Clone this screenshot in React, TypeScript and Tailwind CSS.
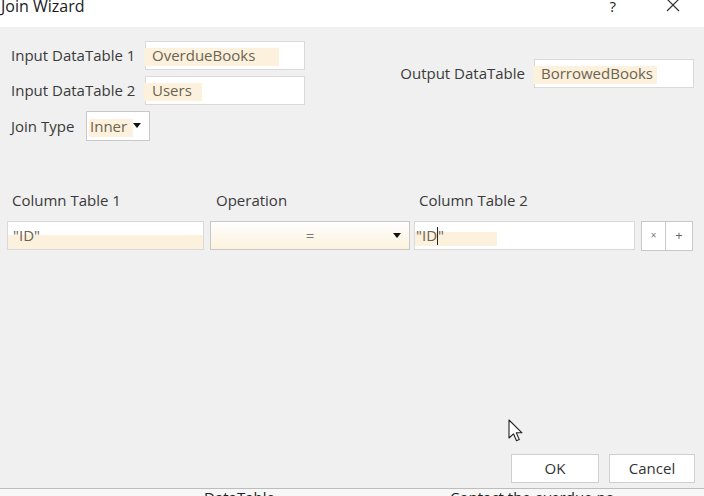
import React from "react";

const font = { fontFamily: '"Open Sans", "Noto Sans", sans-serif' };

function Field({ value, className = "", hl = "w-[135px]" }: { value: string; className?: string; hl?: string }) {
  return (
    <div className={`relative h-[29px] border border-[#d9d9d9] bg-white ${className}`}>
      <div className={`absolute left-[-2px] top-[6px] h-[18px] bg-[#fcf1dc] ${hl}`} />
      <span className="relative block pl-[6px] text-[15px] leading-[27px] text-[#6d6352]">{value}</span>
    </div>
  );
}

function Caret() {
  return (
    <svg width="8" height="5" viewBox="0 0 8 5">
      <path d="M0 0h8L4 5z" fill="#111" />
    </svg>
  );
}

export default function App() {
  return (
    <div className="relative h-[496px] w-[704px] overflow-hidden bg-white" style={font}>
      {/* title bar */}
      <div className="flex h-[27px] items-start justify-between bg-white">
        <span className="mt-[-6px] pl-[1px] text-[16px] text-[#1a1a1a]">Join Wizard</span>
        <div className="mt-[-5px] flex items-start gap-[50px] pr-[24px] text-[#222]">
          <span className="text-[15px]">?</span>
          <svg width="14" height="14" viewBox="0 0 14 14" className="mt-[3px]">
            <path d="M1 1l12 12M13 1L1 13" stroke="#333" strokeWidth="1.2" />
          </svg>
        </div>
      </div>

      {/* dialog body */}
      <div className="flex h-[461px] flex-col bg-[#f0f0f0] text-[15px] text-[#3a3a3a]">
        <div className="flex justify-between pr-[10px] pt-[14px]">
          <div className="flex flex-col gap-[6px] pl-[11px]">
            <div className="flex items-center">
              <span className="w-[134px]">Input DataTable 1</span>
              <Field value="OverdueBooks" className="w-[160px]" />
            </div>
            <div className="flex items-center">
              <span className="w-[134px]">Input DataTable 2</span>
              <Field value="Users" className="w-[160px]" hl="w-[58px]" />
            </div>
            <div className="flex items-center">
              <span className="w-[75px]">Join Type</span>
              <div className="relative flex h-[30px] w-[64px] items-center border border-[#c8c8c8] bg-white">
                <div className="absolute left-[2px] top-[7px] h-[18px] w-[44px] bg-[#fcf1dc]" />
                <span className="relative pl-[3px] text-[#6d6352]">Inner</span>
                <span className="relative mb-[2px] ml-[6px]">
                  <Caret />
                </span>
              </div>
            </div>
          </div>
          <div className="flex items-center gap-[9px] self-start pt-[18px]">
            <span>Output DataTable</span>
            <Field value="BorrowedBooks" className="w-[160px]" hl="w-[124px]" />
          </div>
        </div>

        {/* column headers */}
        <div className="mt-[48px] flex pl-[12px]">
          <span className="w-[204px]">Column Table 1</span>
          <span className="w-[203px]">Operation</span>
          <span>Column Table 2</span>
        </div>

        {/* join row */}
        <div className="mt-[9px] flex items-center pl-[7px]">
          <div className="relative h-[29px] w-[197px] border border-[#d9d9d9] bg-white">
            <div className="absolute inset-x-0 bottom-0 h-[14px] bg-[#fcf1dc]" />
            <span className="relative pl-[5px] leading-[27px] text-[#6d6352]">"ID"</span>
          </div>
          <div className="relative ml-[6px] flex h-[29px] w-[200px] items-center justify-center border border-[#c8c8c8] bg-gradient-to-b from-white to-[#fcf1dc]">
            <span className="text-[#777]">=</span>
            <span className="absolute right-[8px] top-[11px]">
              <Caret />
            </span>
          </div>
          <div className="relative ml-[4px] h-[29px] w-[221px] border border-[#d9d9d9] bg-white">
            <div className="absolute bottom-[3px] left-0 h-[14px] w-[82px] bg-[#fcf1dc]" />
            <span className="relative flex items-center pl-[1px] leading-[27px] text-[#6d6352]">
              "ID<span className="inline-block h-[18px] w-px bg-[#222]" />"
            </span>
          </div>
          <div className="ml-[6px] flex h-[30px]">
            <div className="flex w-[25px] items-center justify-center border border-[#c8c8c8] bg-white text-[10px] text-[#777]">×</div>
            <div className="flex w-[27px] items-center justify-center border border-l-0 border-[#c8c8c8] bg-white text-[13px] text-[#666]">+</div>
          </div>
        </div>

        <div className="flex-1" />

        {/* footer buttons */}
        <div className="flex justify-end gap-[10px] pb-[5px] pr-[9px]">
          <button className="h-[29px] w-[88px] border border-[#cfcfcf] bg-white text-[15px] text-[#333]">OK</button>
          <button className="h-[29px] w-[86px] border border-[#cfcfcf] bg-white text-[15px] text-[#333]">Cancel</button>
        </div>
      </div>

      {/* window behind the dialog */}
      <div className="relative h-[8px] overflow-hidden border-t border-[#bdbdbd] bg-[#f7f7f7] text-[15px] leading-[20px] text-[#222]">
        <span className="absolute left-[204px] top-[-2px]">DataTable</span>
        <span className="absolute left-[450px] top-[-2px]">Contact the overdue no</span>
      </div>

      {/* mouse pointer */}
      <svg className="absolute left-[508px] top-[419px]" width="16" height="24" viewBox="0 0 16 24">
        <path d="M1 1v18l4.5-4.2 3 7 2.8-1.2-3-6.8H14z" fill="#fff" stroke="#222" strokeWidth="1.1" strokeLinejoin="round" />
      </svg>
    </div>
  );
}
